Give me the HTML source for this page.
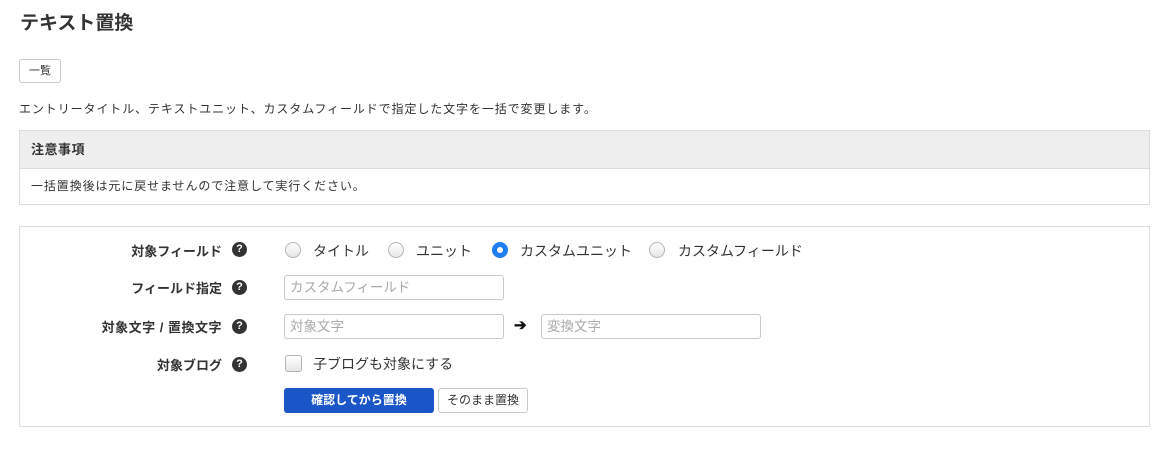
<!DOCTYPE html>
<html><head><meta charset="utf-8"><style>
body{margin:0;width:1166px;height:463px;background:#fff;font-family:"Liberation Sans","Noto Sans CJK JP",sans-serif;color:#333;position:relative;overflow:hidden}
.a{position:absolute;white-space:nowrap}
.help{position:absolute;width:15px;height:15px;border-radius:50%;background:#333;color:#fff;font-size:11px;font-weight:bold;text-align:center;line-height:15px}
.radio{position:absolute;width:16px;height:16px;border-radius:50%;border:1px solid #b5b5b5;background:linear-gradient(#fff,#e6e6e6);box-sizing:border-box}
.inp{position:absolute;height:25px;border:1px solid #c8c8c8;border-radius:3px;box-sizing:border-box;font-size:13.5px;color:#aaa;padding-left:5px;line-height:23px}
.lbl{position:absolute;right:944px;font-size:13px;font-weight:bold;white-space:nowrap}
</style></head><body>
<div class="a" style="left:20px;top:8px;font-size:19px;font-weight:bold;color:#333">テキスト置換</div>
<div class="a" style="left:19px;top:59px;width:42px;height:24px;border:1px solid #c8c8c8;border-radius:3px;box-sizing:border-box;font-size:11px;text-align:center;line-height:22px">一覧</div>
<div class="a" style="left:19px;top:100px;font-size:12px;letter-spacing:0.9px">エントリータイトル、テキストユニット、カスタムフィールドで指定した文字を一括で変更します。</div>
<div class="a" style="left:19px;top:130px;width:1131px;height:75px;border:1px solid #ddd;box-sizing:border-box">
 <div style="height:37px;background:#eee;border-bottom:1px solid #ddd;font-size:13px;font-weight:bold;line-height:37px;padding-left:11px;letter-spacing:0.5px">注意事項</div>
 <div style="font-size:12px;line-height:35px;padding-left:11px;letter-spacing:0.9px">一括置換後は元に戻せませんので注意して実行ください。</div>
</div>
<div class="a" style="left:19px;top:226px;width:1131px;height:201px;border:1px solid #ddd;box-sizing:border-box"></div>
<div class="lbl" style="top:241px">対象フィールド</div>
<div class="lbl" style="top:278px">フィールド指定</div>
<div class="lbl" style="top:317px;letter-spacing:0.5px">対象文字 / 置換文字</div>
<div class="lbl" style="top:355px">対象ブログ</div>
<div class="help" style="left:232px;top:242px">?</div>
<div class="help" style="left:232px;top:280px">?</div>
<div class="help" style="left:232px;top:319px">?</div>
<div class="help" style="left:232px;top:357px">?</div>
<div class="radio" style="left:285px;top:242px"></div>
<div class="a" style="left:313px;top:241px;font-size:14px">タイトル</div>
<div class="radio" style="left:388px;top:242px"></div>
<div class="a" style="left:416px;top:241px;font-size:14px">ユニット</div>
<div class="radio" style="left:492px;top:242px;border:5px solid #1f7ff0;background:#fff"></div>
<div class="a" style="left:520px;top:241px;font-size:14px">カスタムユニット</div>
<div class="radio" style="left:649px;top:242px"></div>
<div class="a" style="left:678px;top:241px;font-size:14px">カスタムフィールド</div>
<div class="inp" style="left:284px;top:275px;width:220px">カスタムフィールド</div>
<div class="inp" style="left:284px;top:314px;width:220px">対象文字</div>
<div class="a" style="left:514px;top:316px;font-size:15px;font-weight:bold;color:#111">➔</div>
<div class="inp" style="left:541px;top:314px;width:220px">変換文字</div>
<div class="a" style="left:285px;top:355px;width:17px;height:17px;border:1px solid #b5b5b5;border-radius:3px;box-sizing:border-box;background:linear-gradient(#fff,#e6e6e6)"></div>
<div class="a" style="left:313px;top:354px;font-size:14px">子ブログも対象にする</div>
<div class="a" style="left:284px;top:388px;width:150px;height:25px;background:#1a56c8;border-radius:3px;color:#fff;font-size:12px;font-weight:bold;text-align:center;line-height:25px">確認してから置換</div>
<div class="a" style="left:438px;top:388px;width:90px;height:25px;border:1px solid #c8c8c8;border-radius:3px;box-sizing:border-box;font-size:12px;text-align:center;line-height:23px">そのまま置換</div>
</body></html>
